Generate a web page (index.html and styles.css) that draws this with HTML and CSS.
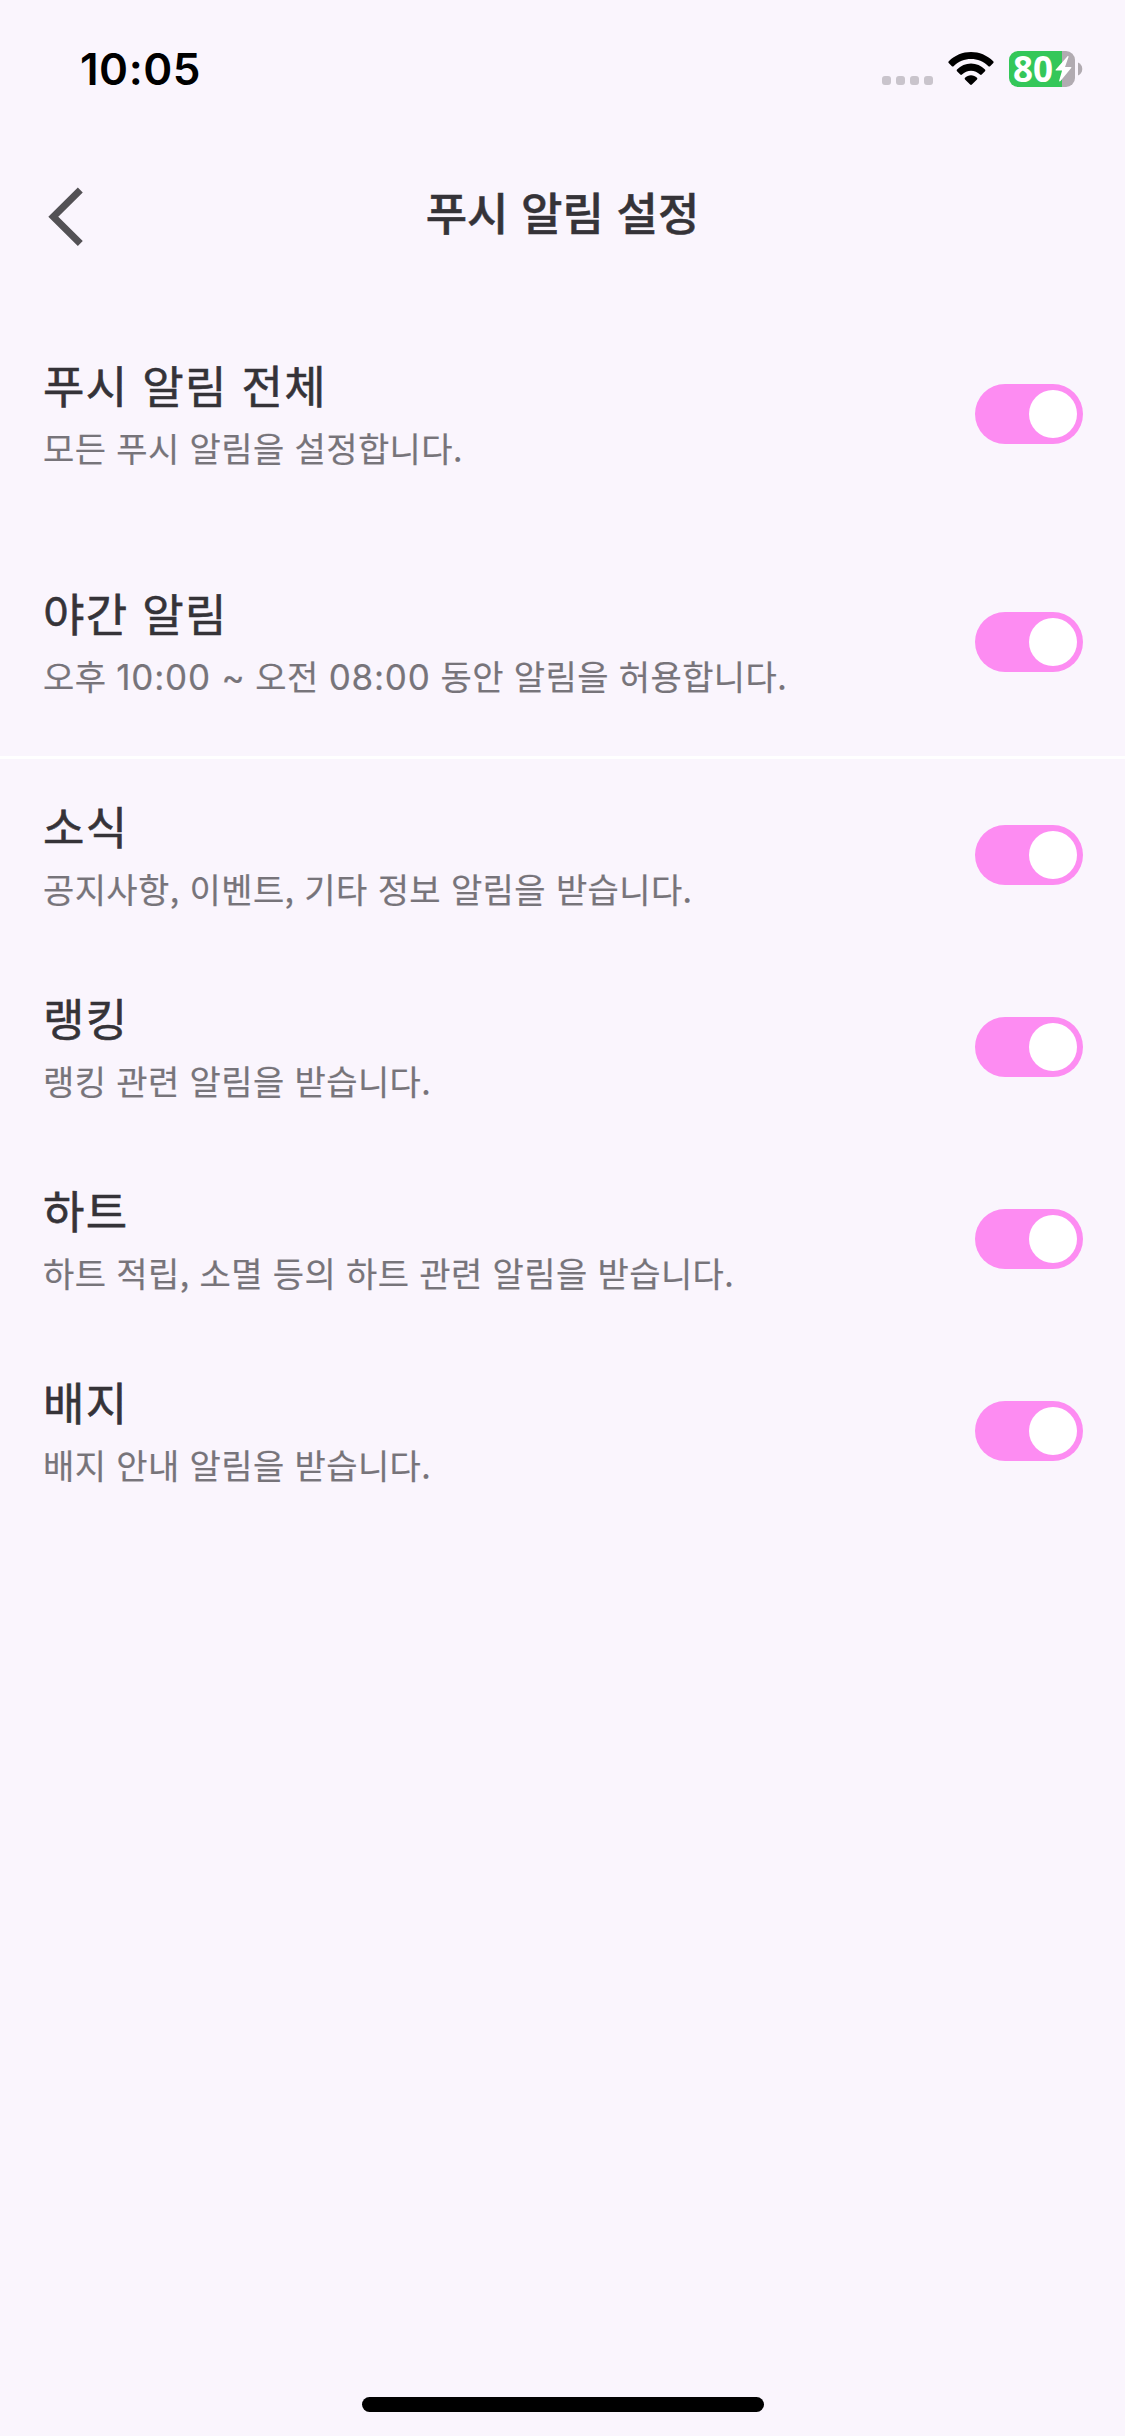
FILE: index.html
```html
<!DOCTYPE html>
<html lang="ko">
<head>
<meta charset="utf-8">
<title>푸시 알림 설정</title>
<link rel="stylesheet" href="styles.css">
</head>
<body>
<div class="screen">
  <div class="status-bar">
    <span class="time">10:05</span>
    <div class="status-icons">
      <div class="cell-dots"><i></i><i></i><i></i><i></i></div>
      <svg class="wifi" width="46" height="34" viewBox="0 0 46 34">
        <path d="M.8 9.2C7 3.200 14.700 0 23 0s16 3.200 22.200 9.200c.6.6.6 1.100.1 1.700l-3.200 3.300c-.5.500-1.100.500-1.700 0C35.600 9.600 29.500 7.100 23 7.100S10.400 9.600 5.600 14.200c-.6.500-1.200.5-1.700 0L.7 10.900c-.5-.6-.5-1.100.1-1.700z"/>
        <path d="M9 17.500c3.800-3.800 8.700-6 14-6s10.200 2.200 14 6c.5.600.5 1.100 0 1.700l-3.300 3.300c-.5.500-1.100.5-1.700 0-2.500-2.400-5.600-3.800-9-3.800s-6.500 1.400-9 3.800c-.6.500-1.200.5-1.700 0L9 19.200c-.5-.6-.5-1.100 0-1.700z"/>
        <path d="M17 25.700c1.600-1.600 3.700-2.500 6-2.500s4.400.9 6 2.500c.5.600.5 1.100 0 1.700l-5.100 5.200c-.6.600-1.200.6-1.800 0L17 27.400c-.5-.6-.5-1.100 0-1.700z"/>
      </svg>
      <div class="battery">
        <div class="battery-body">
          <span>80</span>
          <svg class="bolt" width="17" height="26" viewBox="0 0 17 26"><path d="M12.300.4.800 13.400c-.5.600-.3 1.200.5 1.200h5.800L4.200 24.400c-.3 1.100.6 1.500 1.300.7L16.200 12.100c.5-.7.300-1.200-.5-1.200H10L13.500 1.100C13.900.100 13-.4 12.300.4z" fill="#fff"/></svg>
        </div>
        <svg class="nub" width="5" height="14" viewBox="0 0 5 14"><path d="M0 .5C2.500 1.500 4.300 4 4.300 7S2.500 12.500 0 13.500z" fill="#b1abb1"/></svg>
      </div>
    </div>
  </div>
  <header class="nav">
    <svg class="back" width="36" height="60" viewBox="0 0 36 60"><path d="M32.300 3 5.300 29.800l27 26.800" fill="none" stroke="#535155" stroke-width="7"/></svg>
    <h1>푸시 알림 설정</h1>
  </header>
  <main>
    <section class="group master">
      <div class="row"><div class="copy"><h2>푸시 알림 전체</h2><p>모든 푸시 알림을 설정합니다.</p></div><div class="toggle"></div></div>
      <div class="row"><div class="copy"><h2>야간 알림</h2><p>오후 <span class="num">10:00 ~</span> 오전 <span class="num">08:00</span> 동안 알림을 허용합니다.</p></div><div class="toggle"></div></div>
    </section>
    <section class="group">
      <div class="row"><div class="copy"><h2>소식</h2><p>공지사항, 이벤트, 기타 정보 알림을 받습니다.</p></div><div class="toggle"></div></div>
      <div class="row"><div class="copy"><h2>랭킹</h2><p>랭킹 관련 알림을 받습니다.</p></div><div class="toggle"></div></div>
      <div class="row"><div class="copy"><h2>하트</h2><p>하트 적립, 소멸 등의 하트 관련 알림을 받습니다.</p></div><div class="toggle"></div></div>
      <div class="row"><div class="copy"><h2>배지</h2><p>배지 안내 알림을 받습니다.</p></div><div class="toggle"></div></div>
    </section>
  </main>
  <div class="home-indicator"></div>
</div>
</body>
</html>
```
FILE: styles.css
```css
* { box-sizing: border-box; margin: 0; padding: 0; }
body { background: #faf5fd; }
.screen {
  width: 1125px;
  height: 2436px;
  display: flex;
  flex-direction: column;
  font-family: "Noto Sans CJK KR", sans-serif;
  color: #353338;
}
.status-bar {
  height: 138px;
  padding: 0 42px 0 80px;
  display: flex;
  align-items: center;
  justify-content: space-between;
}
.time {
  font: 600 44px/1 Inter, sans-serif;
  letter-spacing: 0.5px;
  color: #000;
}
.status-icons { display: flex; align-items: center; }
.cell-dots { display: flex; gap: 5px; margin: 23px 15px 0 0; }
.cell-dots i { width: 9px; height: 9px; border-radius: 3px; background: #c9c4cc; }
.wifi { margin-right: 15px; }
.battery { display: flex; align-items: center; gap: 3px; }
.battery-body {
  width: 66px;
  height: 36px;
  padding-left: 4px;
  border-radius: 9px;
  display: flex;
  align-items: center;
  background: linear-gradient(to right, #34c759 53px, #b1abb1 53px);
  font: 700 35px/36px "Noto Sans", sans-serif;
  color: #fff;
}
.bolt { flex: none; margin-left: 2px; }
.nav {
  height: 162px;
  padding: 0 48px 14px;
  display: grid;
  grid-template-columns: 36px 1fr 36px;
  align-items: center;
}
.back { margin-top: 9px; }
.nav h1 {
  text-align: center;
  font-size: 45px;
  font-weight: 500;
  line-height: 72px;
  -webkit-text-stroke: 0.5px;
}
.master { border-bottom: 3px solid #fff; }
.row {
  height: 192px;
  padding: 0 42px;
  display: flex;
  align-items: center;
  justify-content: space-between;
}
.master .row { height: 228px; }
.copy { padding: 0 0 5px 1px; }
.copy h2 {
  font-size: 45px;
  font-weight: 400;
  line-height: 72px;
  letter-spacing: 1.3px;
  -webkit-text-stroke: 0.6px;
}
.copy p {
  font-size: 34px;
  font-weight: 400;
  line-height: 54px;
  letter-spacing: 0.4px;
  -webkit-text-stroke: 0.2px;
  color: #77747a;
}
.num { font-family: Inter, sans-serif; font-size: 35px; line-height: 1; letter-spacing: 0.8px; }
.toggle {
  width: 108px;
  height: 60px;
  padding: 6px;
  border-radius: 30px;
  background: #fd8cf2;
  display: flex;
  justify-content: flex-end;
}
.toggle::after { content: ""; width: 48px; height: 48px; border-radius: 50%; background: #fff; }
.home-indicator {
  width: 402px;
  height: 15px;
  margin: auto auto 24px;
  border-radius: 8px;
  background: #000;
}
```
